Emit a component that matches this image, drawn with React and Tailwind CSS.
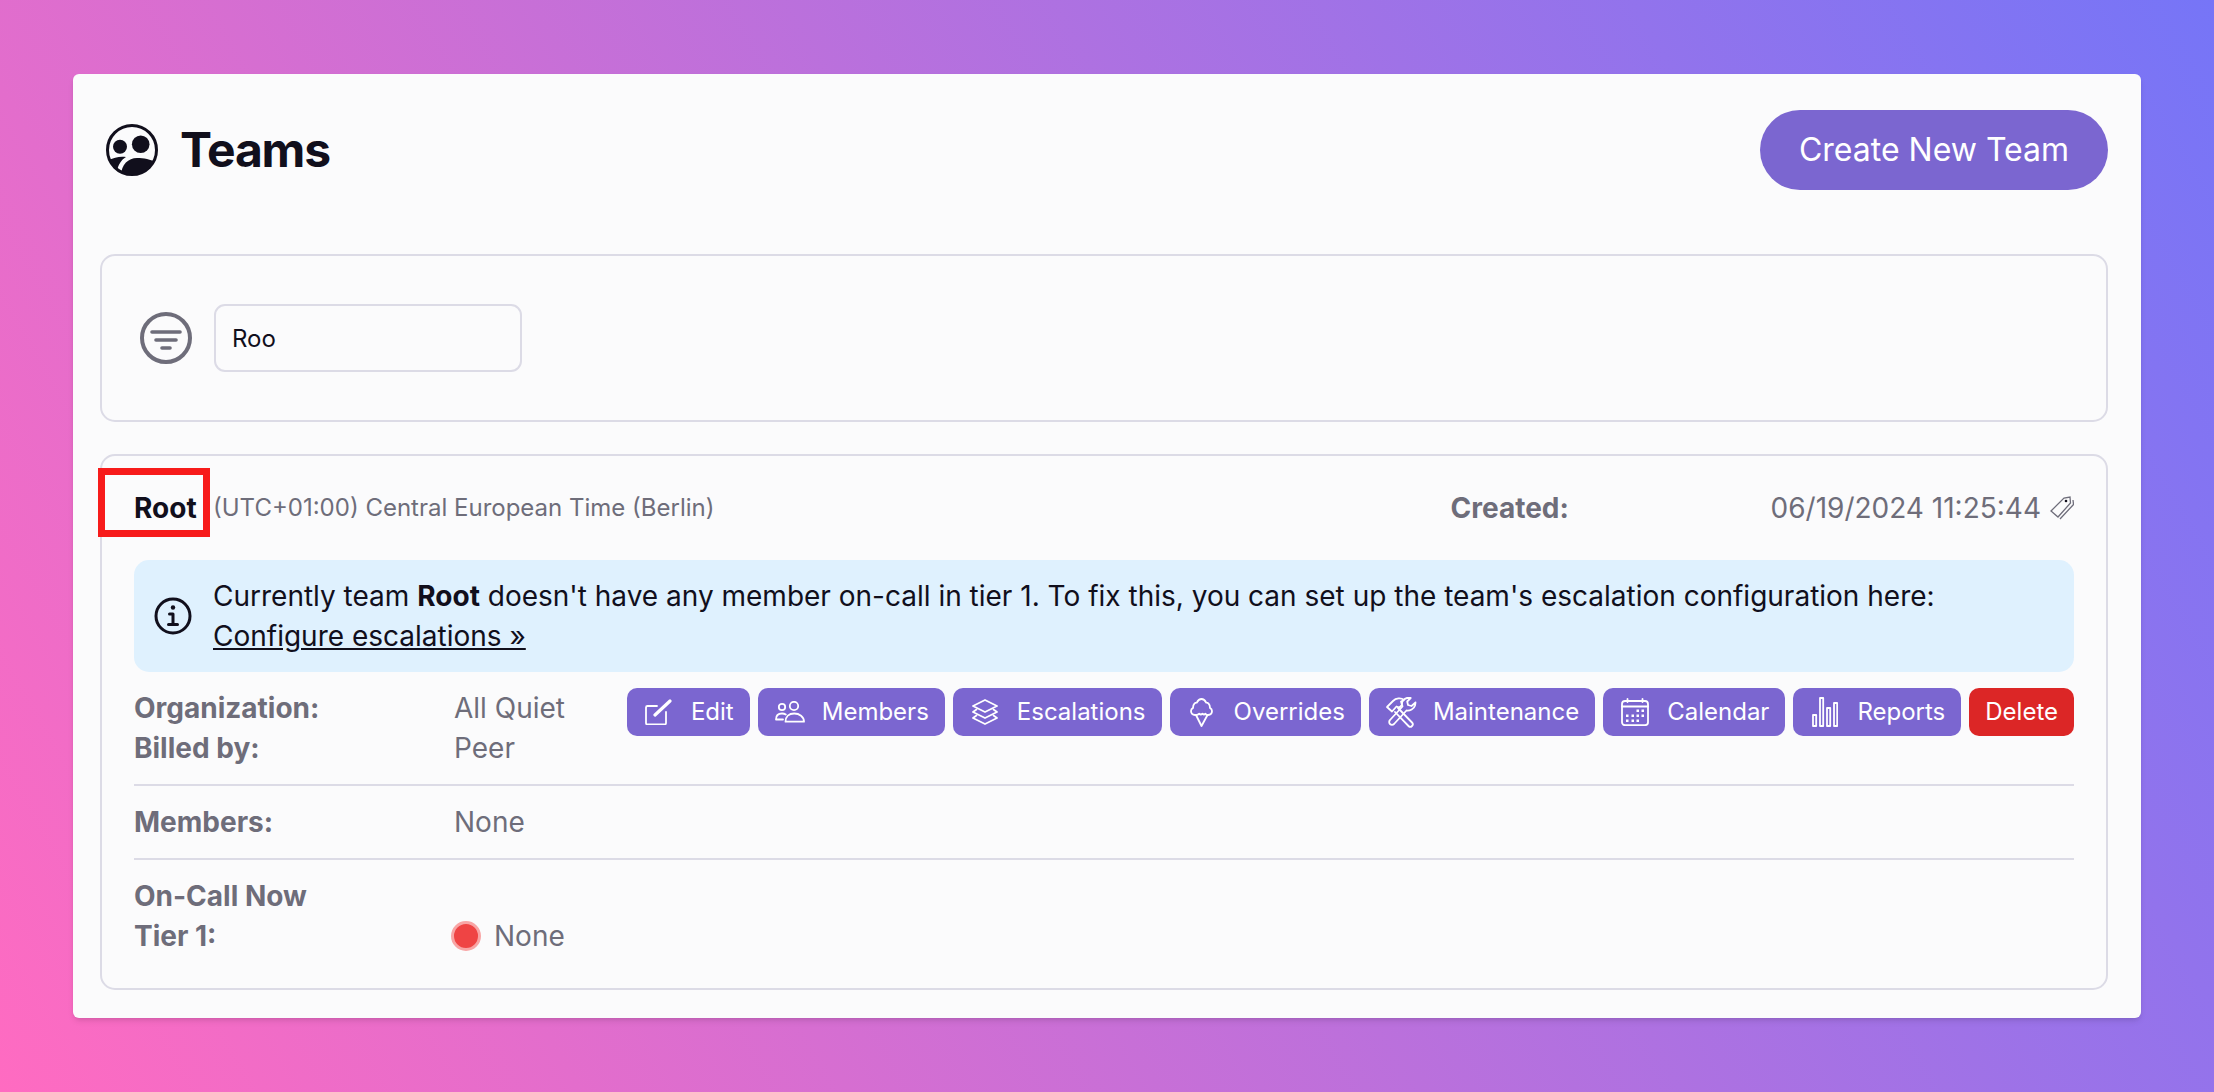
import React from "react";

const Ic = ({ w = 24, h = 24, children, sw = 1.8 }) => (
  <svg width={w} height={h} viewBox={`0 0 ${w} ${h}`} fill="none" stroke="currentColor" strokeWidth={sw} strokeLinecap="round" strokeLinejoin="round" className="shrink-0">{children}</svg>
);

const icons = {
  edit: (
    <Ic w={27} h={26}>
      <path d="M12 7H2.500A1.500 1.500 0 0 0 1 8.500v15.500a1.500 1.500 0 0 0 1.500 1.500h17a1.500 1.500 0 0 0 1.500-1.500V13" />
      <path d="M10 16 25 2" strokeWidth="3.200" />
    </Ic>
  ),
  members: (
    <Ic w={30} h={22}>
      <circle cx="19" cy="5" r="4.200" />
      <circle cx="7" cy="6" r="3.200" />
      <path d="M10.500 20.700c0-5 3.500-8.200 8.700-8.200s9.800 3.200 9.800 8.200z" />
      <path d="M8 18.500H1c0-3.800 2.500-6 6-6 1.500 0 2.800.4 3.800 1.100" />
    </Ic>
  ),
  layers: (
    <Ic w={26} h={26}>
      <path d="M13 1 25 7l-12 6L1 7z" />
      <path d="M4.500 10.500 1 13l12 6 12-6-3.500-2.500" />
      <path d="M4.500 16.500 1 19l12 6 12-6-3.500-2.500" />
    </Ic>
  ),
  icecream: (
    <Ic w={23} h={29}>
      <path d="M5 17c-2.500 0-4-1.800-4-3.900 0-1.500.8-2.600 2-3.200C3 5.500 5.500 4.500 6.800 4.700 8 2.300 9.800 1 11.500 1s3.500 1.300 4.700 3.700c1.300-.2 3.800.8 3.800 5.200 1.200.6 2 1.700 2 3.200 0 2.100-1.500 3.900-4 3.900-1.300 0-2-.6-2.500-1.200-.8.7-2.200.7-3 0-.8.7-2.500.7-3.300 0-.7.6-1.400 1.200-2.700 1.200z" />
      <path d="m6 17 5.500 11L17.500 17" />
    </Ic>
  ),
  tools: (
    <Ic w={32} h={32}>
      <path d="M2 11 8 5c3-3 8-3.500 11-1l-3 1.500 1 3.500-2.500 2.500-3-1L7 15.500z" />
      <path d="m13 12 14 14.500a2.400 2.400 0 0 1-3.500 3.500L10 16" />
      <path d="M22 2c-3 .5-5.500 3.500-5 6.500l.5 2L5 24a2.800 2.800 0 0 0 4 4l12.500-13.500c3.500.5 7.500-1.500 8.500-5l.5-3-4 3.500-3.500-1-.8-3.500 3.500-3.500z" />
    </Ic>
  ),
  calendar: (
    <Ic w={28} h={28}>
      <rect x="1" y="3" width="26" height="24.200" rx="3" />
      <path d="M1 8.500h26M6.500 1v3M21.500 1v3" />
      <g fill="currentColor" stroke="none">
        <rect x="15.500" y="11.500" width="2.500" height="2.500" />
        <rect x="20.500" y="11.500" width="2.500" height="2.500" />
        <rect x="5" y="16.500" width="2.500" height="2.500" />
        <rect x="10.500" y="16.500" width="2.500" height="2.500" />
        <rect x="15.500" y="16.500" width="2.500" height="2.500" />
        <rect x="20.500" y="16.500" width="2.500" height="2.500" />
        <rect x="5" y="21.500" width="2.500" height="2.500" />
        <rect x="10.500" y="21.500" width="2.500" height="2.500" />
        <rect x="15.500" y="21.500" width="2.500" height="2.500" />
      </g>
    </Ic>
  ),
  chart: (
    <Ic w={26} h={30}>
      <rect x="1" y="18" width="3.200" height="11" />
      <rect x="8" y="1" width="3.200" height="28" />
      <rect x="15" y="11" width="3.200" height="18" />
      <rect x="22" y="6" width="3.200" height="23" />
    </Ic>
  ),
};

const Btn = ({ icon, label }) => (
  <button className="h-12 flex items-center gap-4 rounded-[10px] bg-[#7b66d0] pl-4 pr-4 text-[24px] text-white whitespace-nowrap">
    <span className="w-8 flex justify-center">{icons[icon]}</span>
    {label}
  </button>
);

export default function App() {
  return (
    <div className="h-[1092px] w-full overflow-hidden bg-[linear-gradient(60deg,#ff6bc1,#7675f7)] pt-[74px] px-[73px] font-['Inter',sans-serif] text-[#6e6d7a]">
      <div className="h-[944px] rounded-md bg-[#fbfbfc] shadow-md pl-[27px] pr-[33px]">
        <div className="flex h-[180px] items-start justify-between pt-9">
          <div className="flex h-20 items-center gap-[22px] pl-[6px] text-[#110f1c]">
            <svg width="52" height="52" viewBox="0 0 52 52" className="shrink-0">
              <defs>
                <clipPath id="logoClip"><circle cx="26" cy="26" r="25" /></clipPath>
              </defs>
              <circle cx="26" cy="26" r="24.500" fill="#fbfbfc" stroke="#110f1c" strokeWidth="3" />
              <circle cx="14" cy="22.700" r="7" fill="#110f1c" />
              <circle cx="34.700" cy="20.300" r="8.800" fill="#110f1c" />
              <g clipPath="url(#logoClip)" fill="#110f1c">
                <path d="M3 36C8 33.500 14 32 20 33 15 36 12 41 11 47L3 47z" />
                <path d="M15 52C15 41 22 34 31 34c7 0 14 1 21 6v12z" />
              </g>
            </svg>
            <h1 className="text-5xl font-bold tracking-tight leading-none">Teams</h1>
          </div>
          <button className="h-20 w-[348px] rounded-full bg-[#7b66d0] text-[32px] text-white">Create New Team</button>
        </div>

        <div className="h-[168px] rounded-[15px] border-2 border-[#dcdbe6] flex items-center pl-[38px]">
          <svg width="52" height="52" viewBox="0 0 52 52" fill="none" stroke="#6e6d7a" className="shrink-0">
            <circle cx="26" cy="26" r="24" strokeWidth="4" />
            <path d="M12 20h28" strokeWidth="3.600" strokeLinecap="round" />
            <path d="M16 28h20" strokeWidth="3.600" strokeLinecap="round" />
            <path d="M22 36h8" strokeWidth="3.600" strokeLinecap="round" />
          </svg>
          <input readOnly value="Roo" className="ml-[22px] h-[68px] w-[308px] rounded-[11px] border-2 border-[#dcdbe6] px-4 text-[24px] text-[#110f1c] bg-transparent outline-none" />
        </div>

        <div className="mt-8 rounded-[15px] border-2 border-[#dcdbe6] px-8 h-[536px]">
          <div className="flex items-center h-[104px] text-[24px]">
            <div className="relative font-bold text-[#110f1c] text-[28px] leading-10 w-[79px] shrink-0">
              Root
              <div className="absolute left-[-36px] top-[-20px] w-[112px] h-[69px] border-[7px] border-[#f71b1b]" />
            </div>
            <span className="whitespace-nowrap">(UTC+01:00) Central European Time (Berlin)</span>
            <div className="ml-auto flex items-center text-[28px]">
              <span className="font-bold w-[320px]">Created:</span>
              <span className="flex items-center gap-[9px] whitespace-nowrap">
                06/19/2024 11:25:44
                <svg width="24" height="24" viewBox="0 0 24 24" fill="none" stroke="#6e6d7a" strokeWidth="1.300" className="shrink-0">
                  <path d="M1 15 14 2l6-1 .5 6L8 21z" />
                  <path d="m23 4 .5 4.500L10 23" />
                  <circle cx="16" cy="5" r="1.300" fill="#110f1c" stroke="none" />
                </svg>
              </span>
            </div>
          </div>

          <div className="flex items-center rounded-[15px] bg-[#dff1fe] h-[112px] pl-5 text-[#110f1c] text-[28px] gap-[21px] leading-10">
            <svg width="38" height="38" viewBox="0 0 38 38" fill="none" stroke="#110f1c" strokeWidth="3" className="shrink-0">
              <circle cx="19" cy="19" r="17" />
              <path d="M15.500 17H19v10M14.500 27.500h9" strokeLinecap="round" strokeLinejoin="round" />
              <circle cx="19" cy="10.500" r="2.200" fill="#110f1c" stroke="none" />
            </svg>
            <div>
              Currently team <b>Root</b> doesn't have any member on-call in tier 1. To fix this, you can set up the team's escalation configuration here:
              <br />
              <u>Configure escalations »</u>
            </div>
          </div>

          <div className="flex text-[28px] leading-10 h-[114px] border-b-2 border-[#dcdbe6] pt-4">
            <div className="font-bold w-[320px] shrink-0">Organization:<br />Billed by:</div>
            <div className="shrink-0">All Quiet<br />Peer</div>
            <div className="ml-auto flex gap-2 items-start">
              <Btn icon="edit" label="Edit" />
              <Btn icon="members" label="Members" />
              <Btn icon="layers" label="Escalations" />
              <Btn icon="icecream" label="Overrides" />
              <Btn icon="tools" label="Maintenance" />
              <Btn icon="calendar" label="Calendar" />
              <Btn icon="chart" label="Reports" />
              <button className="h-12 flex items-center rounded-[10px] bg-[#dc2626] px-4 text-[24px] text-white">Delete</button>
            </div>
          </div>

          <div className="flex items-center text-[28px] h-[74px] border-b-2 border-[#dcdbe6]">
            <div className="font-bold w-[320px] shrink-0">Members:</div>
            <div>None</div>
          </div>

          <div className="flex text-[28px] leading-10 pt-4">
            <div className="font-bold w-[317px] shrink-0">On-Call Now<br />Tier 1:</div>
            <div className="flex items-center gap-[13px] self-end">
              <span className="w-[30px] h-[30px] rounded-full bg-[#ef4444] border-[3px] border-[#f8a5a5]" />
              None
            </div>
          </div>
        </div>
      </div>
    </div>
  );
}
